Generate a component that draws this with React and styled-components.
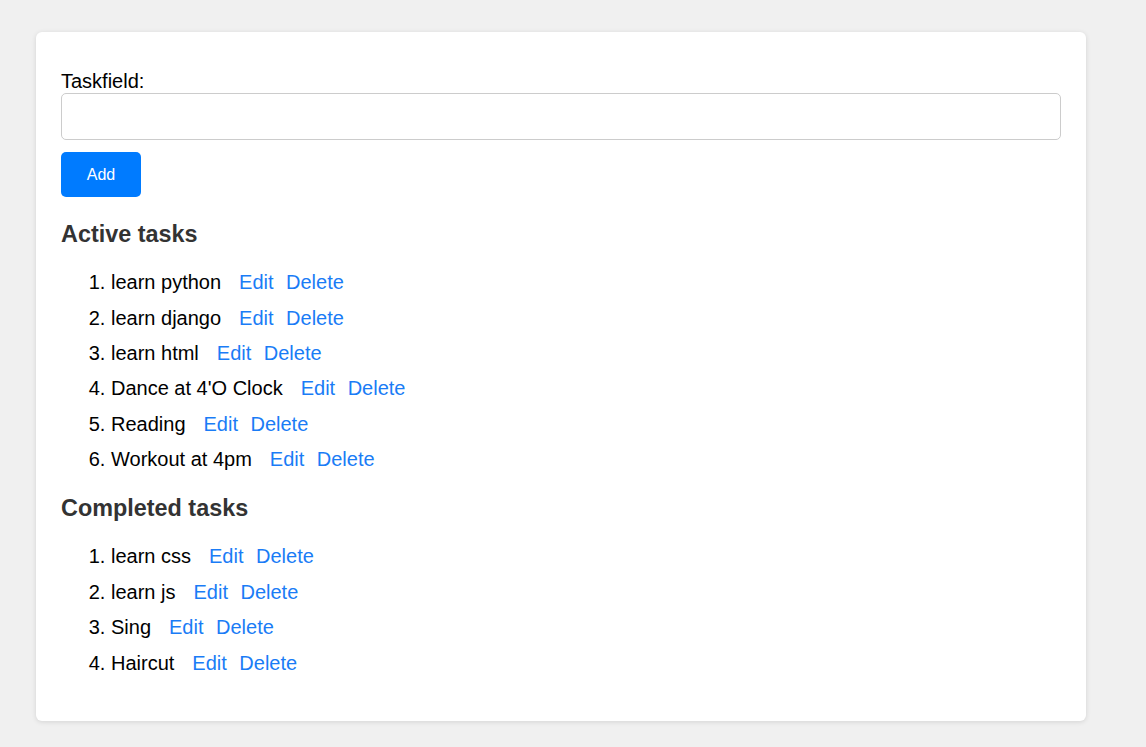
import React from 'react';
import styled, { createGlobalStyle } from 'styled-components';

const GlobalStyle = createGlobalStyle`
  html, body {
    margin: 0;
    background-color: #f0f0f0;
    font-family: "Liberation Sans", Arial, sans-serif;
  }
  body {
    padding: 32px 36px 27px;
  }
`;

const Card = styled.div`
  width: 1050px;
  box-sizing: border-box;
  background-color: #fff;
  border-radius: 6px;
  box-shadow: 0 1px 5px rgba(0, 0, 0, 0.12);
  padding: 25px 25px 40px;
`;

const Form = styled.form`
  padding-top: 13px;
  margin-bottom: 24px;

  label {
    display: block;
    font-size: 20px;
    line-height: 23px;
    color: #000;
  }

  input {
    display: block;
    box-sizing: border-box;
    width: 1000px;
    height: 47px;
    margin: 0 0 12px;
    border: 1px solid #ccc;
    border-radius: 5px;
    font-size: 20px;
    padding: 0 12px;
  }
`;

const AddButton = styled.button`
  display: block;
  width: 80px;
  height: 45px;
  border: none;
  border-radius: 5px;
  background-color: #007bff;
  color: #fff;
  font-family: "Liberation Sans", Arial, sans-serif;
  font-size: 16px;
`;

const Heading = styled.h3`
  margin: 0 0 17px;
  font-size: 23.4px;
  line-height: 27px;
  font-weight: bold;
  color: #333;
`;

const List = styled.ol`
  margin: 0 0 18px;
  padding-left: 50px;

  &:last-child {
    margin-bottom: 0;
  }
`;

const Item = styled.li`
  font-size: 20px;
  line-height: 23px;
  padding: 6.2px 0;
  color: #000;
`;

const Action = styled.a`
  color: #1a7cf6;
  cursor: pointer;
  margin-left: ${({ gap }) => gap}px;
`;

const active = [
  'learn python',
  'learn django',
  'learn html',
  "Dance at 4'O Clock",
  'Reading',
  'Workout at 4pm',
];

const completed = ['learn css', 'learn js', 'Sing', 'Haircut'];

function TaskList({ tasks }) {
  return (
    <List>
      {tasks.map((task) => (
        <Item key={task}>
          <span>{task}</span>
          <Action gap={18}>Edit</Action>
          <Action gap={12.5}>Delete</Action>
        </Item>
      ))}
    </List>
  );
}

export default function App() {
  return (
    <>
      <GlobalStyle />
      <Card>
        <Form onSubmit={(e) => e.preventDefault()}>
          <label htmlFor="task">Taskfield:</label>
          <input id="task" type="text" />
          <AddButton type="submit">Add</AddButton>
        </Form>
        <Heading>Active tasks</Heading>
        <TaskList tasks={active} />
        <Heading>Completed tasks</Heading>
        <TaskList tasks={completed} />
      </Card>
    </>
  );
}
